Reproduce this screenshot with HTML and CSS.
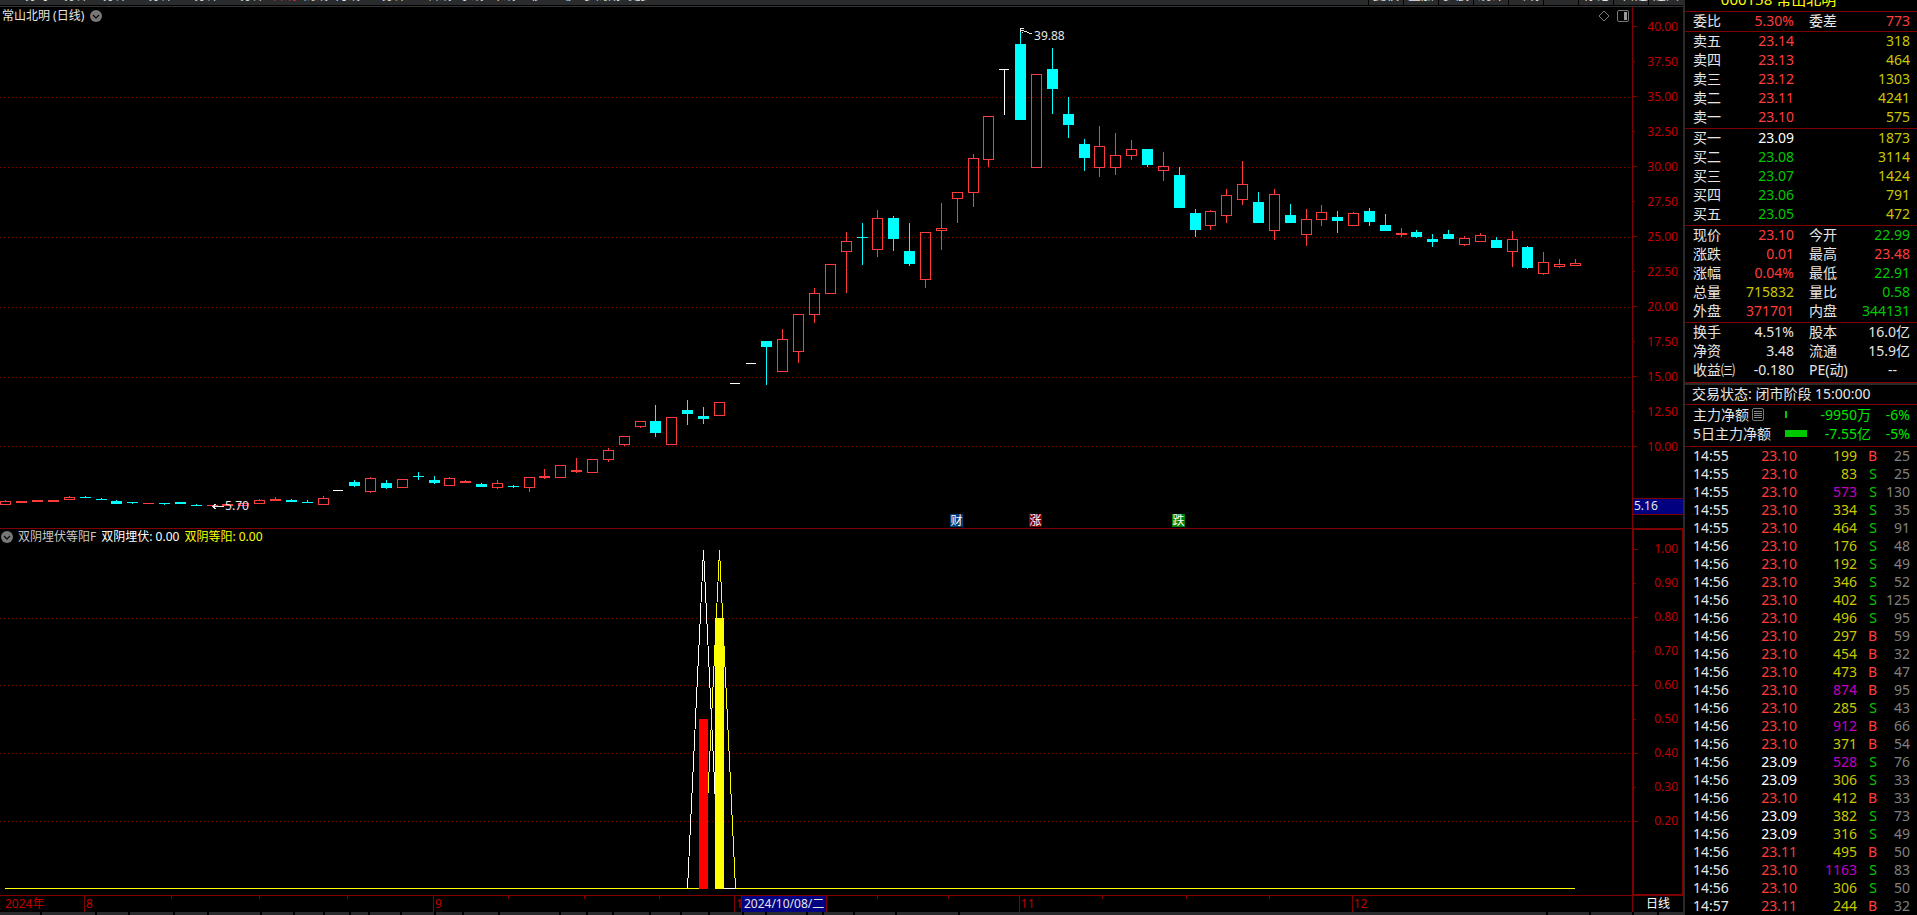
FILE: index.html
```html
<!DOCTYPE html>
<html lang="zh-CN">
<head>
<meta charset="utf-8">
<title>常山北明 日线</title>
<link rel="stylesheet" href="styles.css">
</head>
<body>
<div class="app">
  <main class="charts">
    <nav class="toolbar">
      <div class="periods">
        <button>分时</button><button>1分钟</button><button>5分钟</button><button>15分钟</button><button>30分钟</button><button>60分钟</button><button class="on">日线</button><button>周线</button><button>月线</button><button>10分钟</button><button>45日线</button><button>季线</button><button>年线</button><button>5秒</button><button>15秒</button><button>多周期</button><button>更多</button>
      </div>
      <div class="tools">
        <button>复权</button><button>叠加</button><button>多股</button><button>统计</button><button>画线</button><button>F10</button><button>标记</button><button>+自选</button><button>返回</button>
      </div>
    </nav>

    <section class="pane pane-main">
      <div class="plot">
        <svg id="kline" class="canvas" viewBox="0 7 1632 521" preserveAspectRatio="none"></svg>
        <header class="caption">
          <span>常山北明 (日线)</span>
          <button class="round" aria-label="菜单"><svg viewBox="0 0 12 12"><circle cx="6" cy="6" r="6" fill="#777"/><path d="M3 5l3 3 3-3" fill="none" stroke="#111" stroke-width="1.4"/></svg></button>
          <span class="corner">
            <svg width="12" height="12" viewBox="0 0 12 12"><path d="M6 1l5 5-5 5-5-5z" fill="none" stroke="#777"/></svg>
            <svg width="12" height="12" viewBox="0 0 12 12"><rect x=".5" y=".5" width="11" height="11" rx="1.5" fill="none" stroke="#777"/><rect x="7" y="2" width="3" height="8" fill="#999"/></svg>
          </span>
        </header>
        <span class="note" style="left:63.36%;top:4%">39.88</span>
        <span class="note" style="left:13.79%;top:94.24%">5.70</span>
        <span class="mark fin" style="left:58.21%">财</span>
        <span class="mark up" style="left:63.05%">涨</span>
        <span class="mark down" style="left:71.81%">跌</span>
      </div>
      <div class="axis">
        <ul class="scale">
          <li>40.00</li><li>37.50</li><li>35.00</li><li>32.50</li><li>30.00</li><li>27.50</li><li>25.00</li><li>22.50</li><li>20.00</li><li>17.50</li><li>15.00</li><li>12.50</li><li>10.00</li>
        </ul>
        <span class="cursor-price">5.16</span>
      </div>
    </section>

    <section class="pane pane-sub">
      <div class="plot">
        <svg id="indicator" class="canvas" viewBox="0 529 1632 366" preserveAspectRatio="none"></svg>
        <header class="caption sub">
          <button class="round" aria-label="指标"><svg viewBox="0 0 12 12"><circle cx="6" cy="6" r="6" fill="#777"/><path d="M3 5l3 3 3-3" fill="none" stroke="#111" stroke-width="1.4"/></svg></button>
          <span class="name">双阴埋伏等阳F</span>
          <span class="value">双阴埋伏: 0.00</span>
          <span class="value yellow">双阴等阳: 0.00</span>
        </header>
      </div>
      <div class="axis boxed">
        <ul class="scale fine">
          <li>1.00</li><li>0.90</li><li>0.80</li><li>0.70</li><li>0.60</li><li>0.50</li><li>0.40</li><li>0.30</li><li>0.20</li>
        </ul>
      </div>
    </section>

    <footer class="dates">
      <div class="months">
        <svg id="dateticks" class="canvas" viewBox="0 895 1632 17" preserveAspectRatio="none"></svg>
        <span class="first" style="width:5.15%">2024年</span>
        <span style="width:21.38%">8</span>
        <span style="width:18.44%">9</span>
        <span style="width:17.46%">10</span>
        <span style="width:20.4%">11</span>
        <span style="width:17.17%">12</span>
        <time class="cursor-date" style="left:45.4%">2024/10/08/二</time>
      </div>
      <div class="period">日线</div>
    </footer>
    <div id="tabs" class="tabs"></div>
  </main>

  <aside class="quote">
    <h1 class="stock"><span>000158 常山北明</span></h1>
    <table class="grid block">
      <colgroup><col class="c1"><col class="c2"><col class="c3"><col class="c4"></colgroup>
      <tr><th>委比</th><td class="r">5.30%</td><th>委差</th><td class="r">773</td></tr>
    </table>
    <table class="grid block pad">
      <colgroup><col class="c1"><col class="c2"><col class="c3"><col class="c4"></colgroup>
      <tr><th>卖五</th><td class="r">23.14</td><td></td><td class="y">318</td></tr>
      <tr><th>卖四</th><td class="r">23.13</td><td></td><td class="y">464</td></tr>
      <tr><th>卖三</th><td class="r">23.12</td><td></td><td class="y">1303</td></tr>
      <tr><th>卖二</th><td class="r">23.11</td><td></td><td class="y">4241</td></tr>
      <tr><th>卖一</th><td class="r">23.10</td><td></td><td class="y">575</td></tr>
    </table>
    <table class="grid block pad">
      <colgroup><col class="c1"><col class="c2"><col class="c3"><col class="c4"></colgroup>
      <tr><th>买一</th><td class="w">23.09</td><td></td><td class="y">1873</td></tr>
      <tr><th>买二</th><td class="g">23.08</td><td></td><td class="y">3114</td></tr>
      <tr><th>买三</th><td class="g">23.07</td><td></td><td class="y">1424</td></tr>
      <tr><th>买四</th><td class="g">23.06</td><td></td><td class="y">791</td></tr>
      <tr><th>买五</th><td class="g">23.05</td><td></td><td class="y">472</td></tr>
    </table>
    <table class="grid block pad">
      <colgroup><col class="c1"><col class="c2"><col class="c3"><col class="c4"></colgroup>
      <tr><th>现价</th><td class="r">23.10</td><th>今开</th><td class="g">22.99</td></tr>
      <tr><th>涨跌</th><td class="r">0.01</td><th>最高</th><td class="r">23.48</td></tr>
      <tr><th>涨幅</th><td class="r">0.04%</td><th>最低</th><td class="g">22.91</td></tr>
      <tr><th>总量</th><td class="y">715832</td><th>量比</th><td class="g">0.58</td></tr>
      <tr><th>外盘</th><td class="r">371701</td><th>内盘</th><td class="g">344131</td></tr>
    </table>
    <table class="grid block tall">
      <colgroup><col class="c1"><col class="c2"><col class="c3"><col class="c4"></colgroup>
      <tr><th>换手</th><td>4.51%</td><th>股本</th><td>16.0亿</td></tr>
      <tr><th>净资</th><td>3.48</td><th>流通</th><td>15.9亿</td></tr>
      <tr><th>收益㈢</th><td>-0.180</td><th>PE(动)</th><td class="none">--</td></tr>
    </table>
    <p class="status">交易状态: 闭市阶段 15:00:00</p>
    <div class="funds">
      <div class="fund">
        <span class="fund-name">主力净额<svg width="13" height="13" viewBox="0 0 13 13"><rect x=".5" y=".5" width="11" height="12" rx="1.5" fill="none" stroke="#777"/><path d="M2 3.5h8M2 5.5h8M2 7.5h8M2 9.5h8" stroke="#888"/></svg></span>
        <span class="bar"><i style="width:2px"></i></span>
        <span class="amount">-9950万</span><span class="share">-6%</span>
      </div>
      <div class="fund">
        <span class="fund-name">5日主力净额</span>
        <span class="bar"><i style="width:22px"></i></span>
        <span class="amount">-7.55亿</span><span class="share">-5%</span>
      </div>
    </div>
    <table class="ticks">
      <colgroup><col class="t1"><col class="t2"><col class="t3"><col class="t4"><col class="t5"></colgroup>
      <tbody id="ticks"></tbody>
    </table>
  </aside>
</div>
<script src="chart.js"></script>
</body>
</html>
```

FILE: styles.css
```css
* { box-sizing: border-box; }

body {
  margin: 0;
  background: #000;
  color: #e6e6e6;
  font: 12px/16px "Noto Sans", "Noto Sans CJK SC", sans-serif;
  white-space: nowrap;
}

button {
  padding: 0;
  border: 0;
  background: none;
  color: inherit;
  font: inherit;
}

.app { display: flex; height: 100vh; overflow: hidden; }

.charts {
  flex: 1;
  min-width: 0;
  display: flex;
  flex-direction: column;
  border-right: 2px solid #2a2a2a;
}

/* toolbar, scrolled almost out of view */
.toolbar {
  flex: none;
  height: 7px;
  display: flex;
  justify-content: space-between;
  align-items: flex-end;
  overflow: hidden;
  background: #2a2b2d;
  border-bottom: 1px solid #333;
  box-shadow: inset 0 -1px #000;
}
.periods, .tools { display: flex; }
.periods { gap: 8px; height: 18px; padding: 0 0 2px 25px; }
.periods .on { color: #ff3040; }
.tools { height: 22px; padding-bottom: 1px; }
.tools button { width: 35px; padding-bottom: 2px; border-left: 1px solid #000; font-size: 13px; }

.pane { display: flex; min-height: 0; }
.pane-main { flex: 521 1 0; }
.pane-sub { flex: 367 1 0; }
.plot { position: relative; flex: 1; min-width: 0; }
.pane-sub .plot { border-top: 1px solid #800000; }
.canvas { position: absolute; inset: 0; width: 100%; height: 100%; shape-rendering: crispEdges; }

.caption {
  position: relative;
  display: flex;
  align-items: center;
  gap: 6px;
  padding: 1px 3px 0 2px;
}
.caption.sub { gap: 5px; padding: 0 1px; }
.round { width: 12px; height: 12px; }
.round svg { display: block; width: 12px; height: 12px; }
.corner { display: flex; gap: 7px; margin-left: auto; }
.name { color: #c8c8c8; }
.value { color: #fff; }
.value.yellow { color: #ff0; }

.note { position: absolute; }
.mark {
  position: absolute;
  bottom: 1px;
  width: 13px;
  height: 13px;
  line-height: 13px;
  text-align: center;
  color: #fff;
}
.fin { background: #003c78; }
.up { background: #800000; }
.down { background: #008000; }

.axis {
  position: relative;
  flex: none;
  width: 51px;
  border-left: 1px solid #800000;
}
.axis.boxed { border: solid #800000; border-width: 2px 1px 1px 2px; }
.scale { margin: 0; padding: 2px 5px 0 0; list-style: none; color: #c00000; line-height: 35px; }
.boxed .scale { padding-right: 4px; }
.scale.fine { line-height: 34px; }
.scale li { display: flex; justify-content: space-between; align-items: center; }
.scale li::before { content: ""; width: 4px; height: 1px; background: #800000; }
.scale li:nth-child(even)::before { width: 2px; }
.cursor-price {
  position: absolute;
  left: 0;
  right: 0;
  bottom: 13px;
  height: 17px;
  padding-left: 1px;
  border: solid #800000;
  border-width: 1px 0;
  background: #000080;
  line-height: 14px;
}

.dates { flex: none; display: flex; height: 17px; border-top: 1px solid #800000; color: #c00000; }
.months { position: relative; flex: 1; display: flex; }
.months > span { flex: none; padding-left: 1px; border-left: 1px solid #800000; }
.months > .first { padding-left: 5px; border-left: 0; }
.cursor-date {
  position: absolute;
  top: 0;
  height: 16px;
  padding: 0 2px;
  border: solid #800000;
  border-width: 0 1px;
  background: #000080;
  color: #e6e6e6;
  line-height: 15px;
}
.period { width: 51px; border-left: 1px solid #800000; text-align: center; color: #fff; }
.tabs { flex: none; display: flex; gap: 2px; height: 3px; }
.tabs i { flex: 1 1 0; background: #2a2b2d; }

/* quote panel */
.quote { flex: none; width: 232px; font-size: 14px; line-height: 19px; overflow: hidden; }
.stock {
  display: flex;
  align-items: flex-end;
  justify-content: center;
  height: 12px;
  margin: 0;
  padding: 0 45px 4px 0;
  overflow: hidden;
  border-bottom: 1px solid #800000;
  color: #ff0;
  font-size: 15px;
  font-weight: 400;
  line-height: 16px;
}
.block { display: block; padding-left: 8px; padding-right: 7px; border-bottom: 1px solid #800000; }
.grid, .ticks { border-spacing: 0; table-layout: fixed; }
.pad { padding-bottom: 1px; }
.tall { padding-bottom: 2px; }
.c1 { width: 45px; }
.c2 { width: 56px; }
.c3 { width: 55px; }
.c4 { width: 61px; }
th, td { height: 19px; padding: 0; font-weight: 400; line-height: 18px; text-align: right; vertical-align: top; }
th { text-align: left; }
th:nth-child(3) { padding-left: 15px; }
.r { color: #ff3c3c; }
.g { color: #00c800; }
.y { color: #c8c800; }
.w { color: #fff; }
.p { color: #c000c0; }
.none { padding-right: 13px; }
.status {
  margin: 0;
  padding: 0 0 1px 7px;
  border-top: 2px solid #2a2a2a;
  border-bottom: 1px solid #800000;
  line-height: 18px;
}
.funds { padding: 0 7px 3px 8px; border-bottom: 1px solid #800000; }
.fund { display: flex; align-items: center; }
.fund-name { display: flex; align-items: center; width: 92px; gap: 3px; }
.bar { width: 22px; }
.bar i { display: block; height: 7px; background: #00c800; }
.amount, .share { color: #00e600; text-align: right; }
.amount { flex: 1; }
.share { width: 39px; }
.ticks { width: 225px; padding-left: 8px; }
.ticks td { height: 18px; line-height: 17px; }
.ticks td:first-child { text-align: left; }
.ticks td:last-child { color: #808080; }
.t1 { width: 38px; }
.t2 { width: 66px; }
.t3 { width: 60px; }
.t4 { width: 20px; }
.t5 { width: 33px; }
```

FILE: chart.js
```javascript
const RED = '#ff3c3c', CYAN = '#00ffff', WHITE = '#ffffff', LINE = '#800000';

// [left, kind, body top, body bottom, high, low]; r = rise, c = fall, w = flat
const candles = [
  [0,'r',501,504,500],[16,'r',501,502],[32,'r',500,501],[48,'r',500,501],[64,'r',497,499,496],
  [80,'c',497,497,496],[96,'c',499,499,498],[111,'c',501,503,500],[127,'c',502,502,502,503],[143,'r',503,503],
  [159,'c',503,503,503,504],[175,'c',502,503],[191,'c',505,505,504],[207,'r',505,505],[222,'r',504,505],
  [238,'r',503,505],[254,'r',500,503,499],[270,'r',499,500,497],[286,'c',500,501,499],[302,'c',502,502,500],
  [318,'r',498,504,496],[333,'w',490,490],[349,'c',482,485,480,486],[365,'r',478,491,477,492],[381,'c',483,487,480,488],
  [397,'r',479,487],[413,'c',476,476,472,479],[429,'c',480,482,476,483],[444,'r',478,485,477],[460,'r',481,482,480],
  [476,'c',484,486,483],[492,'r',483,487,480,488],[508,'c',486,486,485,487],[524,'r',477,487,477,491],[539,'r',476,477,469,478],
  [555,'r',465,477],[571,'r',470,471,458,472],[587,'r',459,472],[603,'r',450,459,448,461],[619,'r',436,444,436,445],
  [635,'r',421,426,421,427],[650,'c',421,432,405,436],[666,'r',417,444],[682,'c',410,413,400,424],[698,'c',416,418,407,423],
  [714,'r',402,415],[730,'w',383,383],[746,'w',363,363],[761,'c',341,346,341,384],[777,'r',339,371,329],
  [793,'r',314,351,314,362],[809,'r',293,314,288,322],[825,'r',264,293],[841,'r',241,251,232,292],[857,'c',237,237,223,264],
  [872,'r',218,249,210,256],[888,'c',218,238,216,250],[904,'c',251,263,223,265],[920,'r',232,279,232,287],[936,'r',228,230,203,249],
  [952,'r',192,198,192,222],[968,'r',158,192,154,206],[983,'r',116,159,116,166],[999,'w',69,69,69,114],[1015,'c',44,119,32],
  [1031,'r',74,167],[1047,'c',69,88,48,113],[1063,'c',114,124,97,137],[1079,'c',144,157,139,170],[1094,'r',146,167,126,176],
  [1110,'r',155,167,133,174],[1126,'r',149,155,140,159],[1142,'c',149,164,149,166],[1158,'r',166,170,152,180],[1174,'c',175,207,167],
  [1190,'c',213,229,209,236],[1205,'r',211,225,210,229],[1221,'r',195,215,189,222],[1237,'r',184,199,161,204],[1253,'c',202,222,192],
  [1269,'r',194,230,189,239],[1285,'c',215,222,204],[1301,'r',219,234,209,245],[1316,'r',212,219,205,225],[1332,'c',217,220,211,232],
  [1348,'r',213,225,212],[1364,'c',211,221,208,225],[1380,'c',225,230,214],[1396,'r',233,234,228,236],[1411,'c',232,236,230,237],
  [1427,'c',239,241,234,246],[1443,'c',234,238,230],[1459,'r',238,244,236,245],[1475,'r',235,241,233],[1491,'c',240,247,237],
  [1507,'r',239,251,231,266],[1522,'c',247,267,246,268],[1538,'r',262,273,252,274],[1554,'r',264,266,259,267],[1570,'r',263,265,259]
];

const rect = (x, y, w, h, fill) => `<rect x="${x}" y="${y}" width="${w}" height="${h}" fill="${fill}"/>`;
const dotted = y => `<path d="M0 ${y + .5}H1631" stroke="${LINE}" stroke-dasharray="1 3"/>`;

function candle([x, kind, top, bottom, high = top, low = bottom]) {
  const color = { r: RED, c: CYAN, w: WHITE }[kind];
  const mid = x + 5;
  let out = '';
  if (high < top) out += rect(mid, high, 1, top - high, color);
  if (low > bottom) out += rect(mid, bottom + 1, 1, low - bottom, color);
  if (kind === 'r' && bottom - top > 1)
    out += `<rect x="${x + .5}" y="${top + .5}" width="10" height="${bottom - top}" fill="none" stroke="${color}"/>`;
  else
    out += rect(x, top, kind === 'w' ? 10 : 11, bottom - top + 1, color);
  return out;
}

document.getElementById('kline').innerHTML =
  [97, 167, 237, 307, 377, 446].map(dotted).join('') +
  candles.map(candle).join('') +
  `<g fill="none" stroke="#e6e6e6"><path d="M1020.5 28V32M1020 28.5H1024M1021 30.5H1024M1024 31.5H1027M1027 32.5H1029M1029 33.5H1032M1022 32.5H1023"/>
   <path d="M212 506.5H224M213 505.5H215M214 504.5H216M213 507.5H215M214 508.5H216"/></g>`;

document.getElementById('indicator').innerHTML =
  [618, 685, 753, 821].map(dotted).join('') +
  `<path d="M5 888.5H687.5L703.5 550L719.5 888.5H1575" fill="none" stroke="#fff"/>
   <path d="M5 888.5H703.5L719.5 550L735.5 888.5H1575" fill="none" stroke="#ff0"/>` +
  rect(699, 719, 9, 170, '#ff0000') + rect(715, 618, 9, 271, '#ffff00') +
  rect(708, 888, 7, 1, '#000') + rect(724, 888, 11, 1, '#fff');

document.getElementById('dateticks').innerHTML =
  [171, 259, 347, 508, 584, 659, 877, 948, 1102, 1186, 1269].map(x => rect(x, 895, 1, 3, LINE)).join('');

// bottom tab strip: widths between the tab edges
const edges = [0,41,96,129,173,207,259,292,321,346,363,394,428,455,490,551,577,602,638,668,695,728,750,791,805,835,877,940,1548,1591,1633,1657,1682];
document.getElementById('tabs').innerHTML =
  edges.slice(1).map((e, i) => `<i style="flex-grow:${e - edges[i]}"></i>`).join('');

const ticks = `14:55 23.10 199 B 25
14:55 23.10 83 S 25
14:55 23.10 573 S 130
14:55 23.10 334 S 35
14:55 23.10 464 S 91
14:56 23.10 176 S 48
14:56 23.10 192 S 49
14:56 23.10 346 S 52
14:56 23.10 402 S 125
14:56 23.10 496 S 95
14:56 23.10 297 B 59
14:56 23.10 454 B 32
14:56 23.10 473 B 47
14:56 23.10 874 B 95
14:56 23.10 285 S 43
14:56 23.10 912 B 66
14:56 23.10 371 B 54
14:56 23.09 528 S 76
14:56 23.09 306 S 33
14:56 23.10 412 B 33
14:56 23.09 382 S 73
14:56 23.09 316 S 49
14:56 23.11 495 B 50
14:56 23.10 1163 S 83
14:56 23.10 306 S 50
14:57 23.11 244 B 32`;
document.getElementById('ticks').innerHTML = ticks.split('\n').map(line => {
  const [time, price, volume, side, count] = line.split(' ');
  return `<tr><td>${time}</td><td class="${price === '23.09' ? 'w' : 'r'}">${price}</td>` +
    `<td class="${volume > 500 ? 'p' : 'y'}">${volume}</td>` +
    `<td class="${side === 'B' ? 'r' : 'g'}">${side}</td><td>${count}</td></tr>`;
}).join('');
```
